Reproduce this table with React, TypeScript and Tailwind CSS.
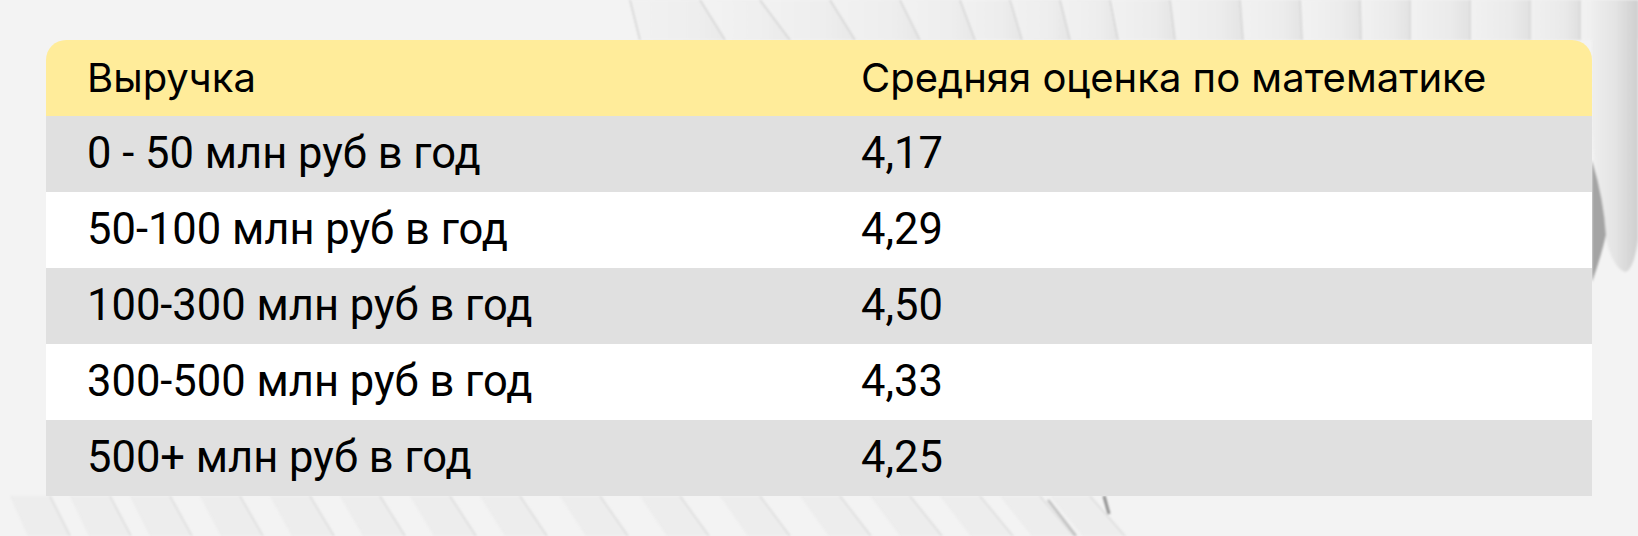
const rows = [
	["0 - 50 млн руб в год", "4,17"],
	["50-100 млн руб в год", "4,29"],
	["100-300 млн руб в год", "4,50"],
	["300-500 млн руб в год", "4,33"],
	["500+ млн руб в год", "4,25"],
]

// strips of the feather at the top, left x at y=0 and at y=40
const topStrips = [
	[630, 640], [700, 725], [760, 790], [830, 855], [900, 920], [960, 975], [1010, 1022],
	[1060, 1070], [1110, 1118], [1170, 1175], [1240, 1243], [1300, 1302], [1360, 1361],
	[1410, 1410], [1470, 1470], [1530, 1530], [1580, 1580],
]

const bottomStrips = [10, 70, 130, 200, 270, 340, 410, 480, 560, 640, 720, 800, 870, 940, 1000, 1050]

function Feathers() {
	return (
		<svg className="absolute inset-0 w-full h-full" viewBox="0 0 1638 536">
			<defs>
				<linearGradient id="band" x1="0" y1="0" x2="1" y2="0">
					<stop offset="0" stopColor="#f1f1f1" />
					<stop offset="0.7" stopColor="#e9e9e9" />
					<stop offset="1" stopColor="#dedede" />
				</linearGradient>
				<linearGradient id="tip" x1="0" y1="0" x2="1" y2="0">
					<stop offset="0" stopColor="#eeeeee" />
					<stop offset="0.5" stopColor="#e4e4e4" />
					<stop offset="1" stopColor="#cfcfcf" />
				</linearGradient>
				<filter id="soft">
					<feGaussianBlur stdDeviation="1.2" />
				</filter>
			</defs>
			<g filter="url(#soft)">
				{topStrips.map(([a, b], i) => {
					const n = topStrips[i + 1] ?? [1640, 1640]
					return <polygon key={a} points={`${a},0 ${n[0]},0 ${n[1]},40 ${b},40`} fill="url(#band)" opacity={0.45 + i * 0.03} />
				})}
				{topStrips.map(([a, b]) => (
					<line key={"l" + a} x1={a} y1="0" x2={b} y2="40" stroke="#d4d4d4" strokeWidth="1.5" />
				))}
				{bottomStrips.map((x, i) => (
					<polygon key={x} points={`${x},496 ${x + 40},496 ${x + 60 + i},536 ${x + 18 + i},536`} fill="#e9e9e9" opacity="0.7" />
				))}
				{bottomStrips.map((x, i) => (
					<line key={"b" + x} x1={x + 40} y1="496" x2={x + 60 + i} y2="536" stroke="#dcdcdc" strokeWidth="1.5" />
				))}
				<path d="M1592 0 L1638 0 L1638 240 Q1634 268 1626 272 Q1614 270 1606 240 Q1596 190 1592 130 Z" fill="url(#tip)" />
				<path d="M1592 160 Q1604 200 1606 235 Q1600 260 1592 282 Z" fill="#a4a4a4" />
				<path d="M1104 496 L1109 514" stroke="#8f8f8f" strokeWidth="3" fill="none" />
				<path d="M1048 500 L1076 536" stroke="#bdbdbd" strokeWidth="2.5" fill="none" />
			</g>
		</svg>
	)
}

function App() {
	return (
		<div className="relative w-full h-[536px] bg-[#f3f3f3] overflow-hidden pt-[40px] pl-[46px]">
			<Feathers />
			<div className="relative w-[1546px]">
				<div className="h-[76px] flex items-center pl-[41px] bg-[#ffec9a] rounded-t-[20px] text-[40px] text-black" style={{ fontFamily: "Inter, sans-serif" }}>
					<div className="w-[774px]">Выручка</div>
					<div>Средняя оценка по математике</div>
				</div>
				{rows.map((r, i) => (
					<div key={i} className={"h-[76px] flex items-center pl-[41px] text-[43.5px] text-black " + (i % 2 === 0 ? "bg-[#e0e0e0]" : "bg-white")} style={{ fontFamily: "Roboto, sans-serif" }}>
						<div className="w-[774px]">{r[0]}</div>
						<div>{r[1]}</div>
					</div>
				))}
			</div>
		</div>
	)
}

export default App
